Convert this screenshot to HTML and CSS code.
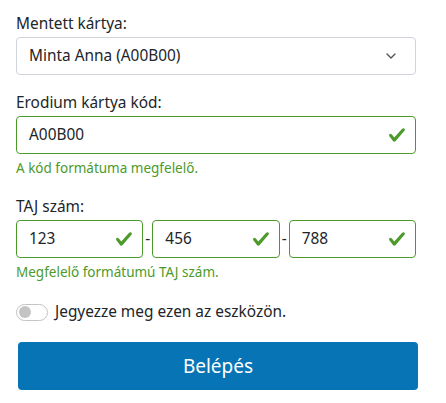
FILE: index.html
```html
<!DOCTYPE html>
<html lang="hu">
<head>
<meta charset="utf-8">
<title>Belépés</title>
<link rel="stylesheet" href="styles.css">
</head>
<body>
<form class="form">
  <div class="group">
    <label class="label">Mentett kártya:</label>
    <div class="control select">
      <span>Minta Anna (A00B00)</span>
      <svg class="chev" width="10" height="6" viewBox="0 0 10 6"><path d="M1 1l4 4 4-4" fill="none" stroke="#555" stroke-width="1.4" stroke-linecap="round" stroke-linejoin="round"/></svg>
    </div>
  </div>

  <div class="group">
    <label class="label">Erodium kártya kód:</label>
    <div class="control valid">
      <span>A00B00</span>
      <svg class="check" width="18" height="18" viewBox="0 0 8 8"><path fill="#4c9a2a" d="M2.3 6.73.6 4.530c-.4-1.04.46-1.4 1.1-.8l1.1 1.4 3.4-3.8c.6-.63 1.6-.27 1.2.7l-4 4.6c-.43.5-.8.4-1.1.1z"/></svg>
    </div>
    <div class="feedback">A kód formátuma megfelelő.</div>
  </div>

  <div class="group">
    <label class="label">TAJ szám:</label>
    <div class="taj">
      <div class="control valid">
        <span>123</span>
        <svg class="check" width="18" height="18" viewBox="0 0 8 8"><path fill="#4c9a2a" d="M2.3 6.73.6 4.53c-.4-1.04.46-1.4 1.1-.8l1.1 1.4 3.4-3.8c.6-.63 1.6-.27 1.2.7l-4 4.6c-.43.5-.8.4-1.1.1z"/></svg>
      </div>
      <span class="dash">-</span>
      <div class="control valid">
        <span>456</span>
        <svg class="check" width="18" height="18" viewBox="0 0 8 8"><path fill="#4c9a2a" d="M2.3 6.73.6 4.53c-.4-1.04.46-1.4 1.1-.8l1.1 1.4 3.4-3.8c.6-.63 1.6-.27 1.2.7l-4 4.6c-.43.5-.8.4-1.1.1z"/></svg>
      </div>
      <span class="dash">-</span>
      <div class="control valid">
        <span>788</span>
        <svg class="check" width="18" height="18" viewBox="0 0 8 8"><path fill="#4c9a2a" d="M2.3 6.73.6 4.53c-.4-1.04.46-1.4 1.1-.8l1.1 1.4 3.4-3.8c.6-.63 1.6-.27 1.2.7l-4 4.6c-.43.5-.8.4-1.1.1z"/></svg>
      </div>
    </div>
    <div class="feedback">Megfelelő formátumú TAJ szám.</div>
  </div>

  <div class="switch-row">
    <span class="switch"><span class="knob"></span></span>
    <span class="switch-label">Jegyezze meg ezen az eszközön.</span>
  </div>

  <button type="button" class="btn">Belépés</button>
</form>
</body>
</html>
```

FILE: styles.css
```css
* { box-sizing: border-box; }
html, body { margin: 0; padding: 0; background: #fff; }
body {
  font-family: "Noto Sans", "Open Sans", sans-serif;
  font-size: 15.4px;
  line-height: 24px;
  color: #212529;
}
.form {
  width: 400px;
  margin: 12px 0 0 16px;
}
.group { margin-bottom: 16px; }
.label { display: block; margin-bottom: 1px; }
.control {
  height: 38px;
  border: 1px solid #ced4da;
  border-radius: 4px;
  padding: 0 9px 0 12px;
  display: flex;
  align-items: center;
  justify-content: space-between;
  background: #fff;
}
.select { padding-right: 19px; }
.chev { display: block; }
.valid { border-color: #4c9a2a; }
.check { display: block; flex: none; }
.feedback {
  margin-top: 4px;
  font-size: 13.5px;
  line-height: 21px;
  color: #4c9a2a;
}
.taj { display: flex; align-items: center; }
.taj .control { flex: 1; min-width: 0; }
.dash { width: 9px; text-align: center; flex: none; }
.switch-row {
  display: flex;
  align-items: center;
  gap: 7px;
  margin-top: 17px;
}
.switch {
  width: 32px;
  height: 17px;
  border: 1px solid #c4c4c4;
  border-radius: 9px;
  padding: 1px 2px;
  display: flex;
  align-items: center;
}
.knob {
  width: 12px;
  height: 12px;
  border-radius: 50%;
  background: #c4c4c4;
}
.btn {
  display: block;
  width: 400px;
  height: 48px;
  margin: 18px 0 0 2px;
  border: 0;
  border-radius: 4px;
  background: #0774b5;
  color: #fff;
  font-family: inherit;
  font-size: 19px;
}
```
